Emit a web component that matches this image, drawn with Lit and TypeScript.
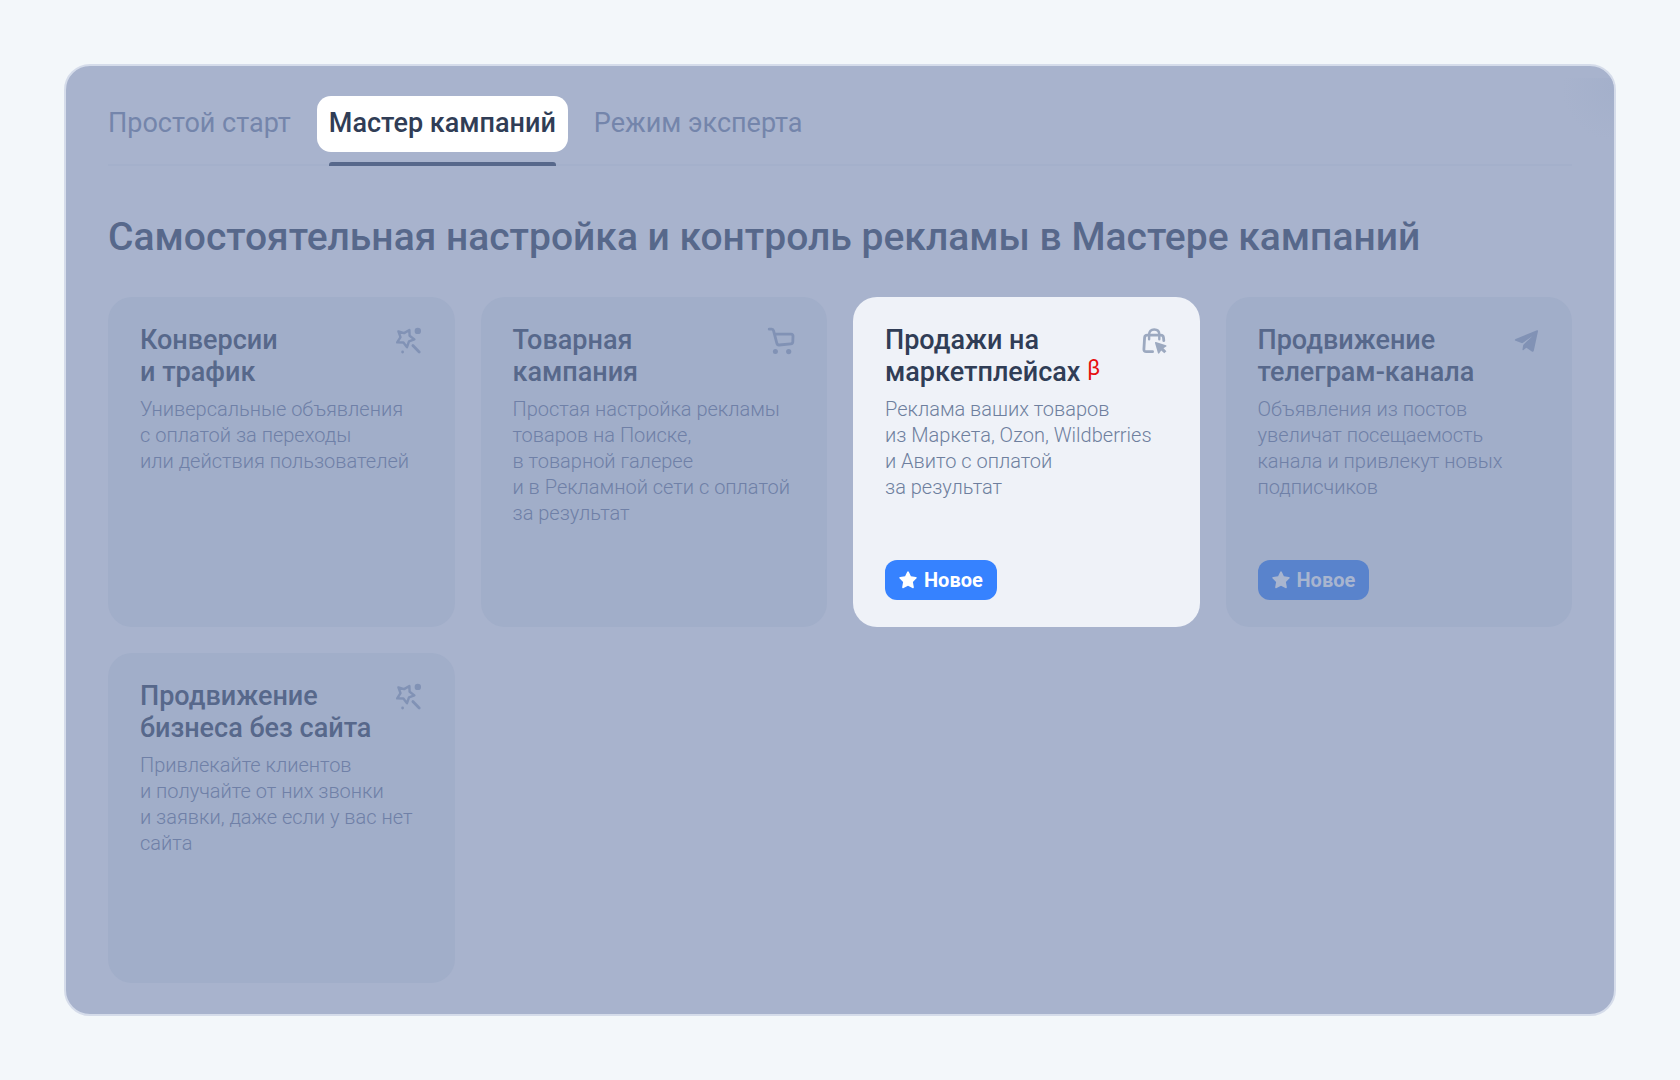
import { LitElement, html, css, svg, nothing } from "lit";
import { customElement, property } from "lit/decorators.js";
import { classMap } from "lit/directives/class-map.js";

type IconName = "wand" | "cart" | "bag" | "plane";

interface Campaign {
  title: string[];
  text: string[];
  icon: IconName;
  beta?: boolean;
  fresh?: boolean;
  active?: boolean;
}

const TABS = ["Простой старт", "Мастер кампаний", "Режим эксперта"];
const ACTIVE_TAB = 1;

const CAMPAIGNS: Campaign[] = [
  {
    title: ["Конверсии", "и трафик"],
    text: ["Универсальные объявления", "с оплатой за переходы", "или действия пользователей"],
    icon: "wand",
  },
  {
    title: ["Товарная", "кампания"],
    text: [
      "Простая настройка рекламы",
      "товаров на Поиске,",
      "в товарной галерее",
      "и в Рекламной сети с оплатой",
      "за результат",
    ],
    icon: "cart",
  },
  {
    title: ["Продажи на", "маркетплейсах"],
    text: ["Реклама ваших товаров", "из Маркета, Ozon, Wildberries", "и Авито с оплатой", "за результат"],
    icon: "bag",
    beta: true,
    fresh: true,
    active: true,
  },
  {
    title: ["Продвижение", "телеграм-канала"],
    text: ["Объявления из постов", "увеличат посещаемость", "канала и привлекут новых", "подписчиков"],
    icon: "plane",
    fresh: true,
  },
  {
    title: ["Продвижение", "бизнеса без сайта"],
    text: ["Привлекайте клиентов", "и получайте от них звонки", "и заявки, даже если у вас нет", "сайта"],
    icon: "wand",
  },
];

const ICONS = {
  wand: svg`
    <path class="line" d="M14.4 3 14.6 8.8 19.4 12.4 14 14.4 12 20.2 8.4 15.5 2.2 15.4 5.5 10.2 3.4 4.4 9.1 6.1Z"/>
    <path class="line thick" d="M17.9 18.6 24.2 24.9"/>
    <circle cx="22.8" cy="3.9" r="3.2"/>
    <circle cx="7.6" cy="25" r="1.4"/>`,
  cart: svg`
    <path class="line thick" d="M2.2 2.2H4.6Q6.2 2.2 6.6 3.8L9.8 16.2Q10.3 18.2 12.2 18L23.8 16.8Q25.7 16.6 25.8 14.8L26 9Q26 7.2 24.2 7.2H7.8"/>
    <circle cx="8.4" cy="24.6" r="2.5"/>
    <circle cx="21.7" cy="24.6" r="2.6"/>`,
  bag: svg`
    <path class="line thick" d="M12.6 24.7H6.2Q3.8 24.7 3.9 22.3L4.6 10.6Q4.8 8.2 7.2 8.2H20.8Q23.2 8.2 23.5 10.6L23.8 13.6"/>
    <path class="line" d="M9.1 12.2V7.6Q9.1 2.5 14.2 2.5Q19.3 2.5 19.3 7.6V12.2"/>
    <path d="M15.9 15.1 26 18.3Q27.2 18.9 26.2 19.6L23.5 21.3 26.4 24.2 24.3 26.3 21.2 23.4 19.3 26.2Q18.4 27.2 17.9 26L15 16.1Q14.8 14.9 15.9 15.1Z"/>`,
  plane: svg`
    <path d="M25 3.2 3.6 12Q2 13 3.6 13.7L9.6 16.1Q10.4 16.3 11 15.8L20.6 8.9 11.8 17.2Q11.3 17.8 11.1 18.6L10.5 22.4Q10.5 23.6 11.5 22.9L14.4 20.7 19.8 24.6Q21.3 25.4 21.8 23.8L26 4.2Q26.2 2.9 25 3.2Z"/>`,
};

@customElement("campaign-card")
class CampaignCard extends LitElement {
  @property({ attribute: false }) campaign!: Campaign;

  static styles = css`
    :host {
      display: block;
    }
    .card {
      box-sizing: border-box;
      display: flex;
      flex-direction: column;
      gap: 8px;
      height: 100%;
      min-height: 330px;
      padding: 27px 32px;
      border-radius: 24px;
      background: #a1aec9;
      color: #6f80a7;
      text-decoration: none;
    }
    .head {
      display: flex;
      justify-content: space-between;
      align-items: flex-start;
    }
    .title {
      margin: 0;
      font-size: 27px;
      font-weight: 500;
      line-height: 32px;
      color: #57688b;
    }
    .beta {
      font-size: 22px;
      font-weight: 400;
      line-height: 0;
      vertical-align: 6px;
      color: #e60f0f;
    }
    .icon {
      flex: none;
      width: 28px;
      height: 28px;
      margin-top: 3px;
      fill: #8192b5;
      stroke: none;
    }
    .line {
      fill: none;
      stroke: #8192b5;
      stroke-width: 2.4;
      stroke-linecap: round;
      stroke-linejoin: round;
    }
    .thick {
      stroke-width: 2.8;
    }
    .text {
      margin: 0;
      font-size: 20px;
      font-weight: 300;
      line-height: 26px;
      white-space: nowrap;
    }
    .badge {
      display: flex;
      align-items: center;
      align-self: flex-start;
      gap: 7px;
      margin-top: auto;
      padding: 0 14px;
      border-radius: 12px;
      background: #5983cc;
      color: #a8b5cf;
      font-size: 20px;
      font-weight: 700;
      line-height: 40px;
    }
    .star {
      width: 18px;
      height: 18px;
      fill: currentColor;
    }
    .active {
      background: #eff2f8;
      color: #6e7f9e;
    }
    .active .title {
      color: #303d56;
    }
    .active .icon {
      fill: #9ca9c0;
    }
    .active .line {
      stroke: #9ca9c0;
    }
    .active .badge {
      background: #3682ff;
      color: #ffffff;
    }
  `;

  private lines(list: string[]) {
    return list.map((line, i) => (i ? html`<br />${line}` : line));
  }

  render() {
    const c = this.campaign;
    return html`
      <a href="#" class=${classMap({ card: true, active: !!c.active })}>
        <div class="head">
          <h2 class="title">
            ${this.lines(c.title)}${c.beta ? html` <sup class="beta">β</sup>` : nothing}
          </h2>
          <svg class="icon" viewBox="0 0 28 28" aria-hidden="true">${ICONS[c.icon]}</svg>
        </div>
        <p class="text">${this.lines(c.text)}</p>
        ${c.fresh
          ? html`<span class="badge">
              <svg class="star" viewBox="0 0 18 18" aria-hidden="true">
                <path
                  d="M8.1.9Q9-.5 9.9.9L11.9 5.2 16.8 5.9Q18.4 6.3 17.3 7.5L13.9 11 14.8 16Q14.9 17.7 13.4 17L9 14.7 4.6 17Q3.1 17.7 3.2 16L4.1 11 .7 7.5Q-.4 6.3 1.2 5.9L6.1 5.2Z"
                />
              </svg>
              <span>Новое</span>
            </span>`
          : nothing}
      </a>
    `;
  }
}

@customElement("app-root")
class AppRoot extends LitElement {
  static styles = css`
    :host {
      display: block;
      box-sizing: border-box;
      min-height: 100vh;
      padding: 64px;
      background: #f3f7fa;
      font-family: Roboto, "Noto Sans", sans-serif;
    }
    .panel {
      position: relative;
      box-sizing: border-box;
      min-height: calc(100vh - 128px);
      padding: 30px 42px;
      border: 2px solid #d5dcea;
      border-radius: 26px;
      background: #a8b3cd;
      overflow: hidden;
    }
    .glow {
      position: absolute;
      top: 12px;
      right: 0;
      width: 52px;
      height: 66px;
      background: radial-gradient(circle at 100% 16%, #a4b0cb, #a8b3cd 52px);
    }
    .tabs {
      display: flex;
      gap: 14px;
      margin: 0 -12px;
    }
    .tabs-rule {
      height: 2px;
      margin-top: -2px;
      background: #a4b0cb;
    }
    .tab {
      position: relative;
      z-index: 1;
      display: flex;
      flex-direction: column;
      gap: 10px;
    }
    .tab-button {
      padding: 0 12px 2px;
      border: 0;
      border-radius: 14px;
      background: none;
      font: 400 27px/54px Roboto, "Noto Sans", sans-serif;
      color: #7485ab;
      cursor: pointer;
    }
    .mark {
      height: 4px;
      margin: 0 12px;
      border-radius: 3px 3px 0 0;
    }
    .current .tab-button {
      background: #ffffff;
      color: #303d56;
      font-weight: 500;
    }
    .current .mark {
      background: #57688b;
    }
    .heading {
      margin: 47px 0 36px;
      font-size: 39px;
      font-weight: 500;
      line-height: 48px;
      color: #57688b;
    }
    .grid {
      display: grid;
      grid-template-columns: repeat(4, minmax(0, 1fr));
      gap: 26px;
    }
  `;

  render() {
    return html`
      <main class="panel">
        <div class="glow"></div>
        <div class="tabs" role="tablist">
          ${TABS.map(
            (label, i) => html`
              <div class=${classMap({ tab: true, current: i === ACTIVE_TAB })} role="presentation">
                <button class="tab-button" type="button" role="tab" aria-selected=${i === ACTIVE_TAB}>
                  ${label}
                </button>
                <span class="mark"></span>
              </div>
            `
          )}
        </div>
        <div class="tabs-rule"></div>
        <h1 class="heading">Самостоятельная настройка и контроль рекламы в Мастере кампаний</h1>
        <div class="grid">
          ${CAMPAIGNS.map((c) => html`<campaign-card .campaign=${c}></campaign-card>`)}
        </div>
      </main>
    `;
  }
}
